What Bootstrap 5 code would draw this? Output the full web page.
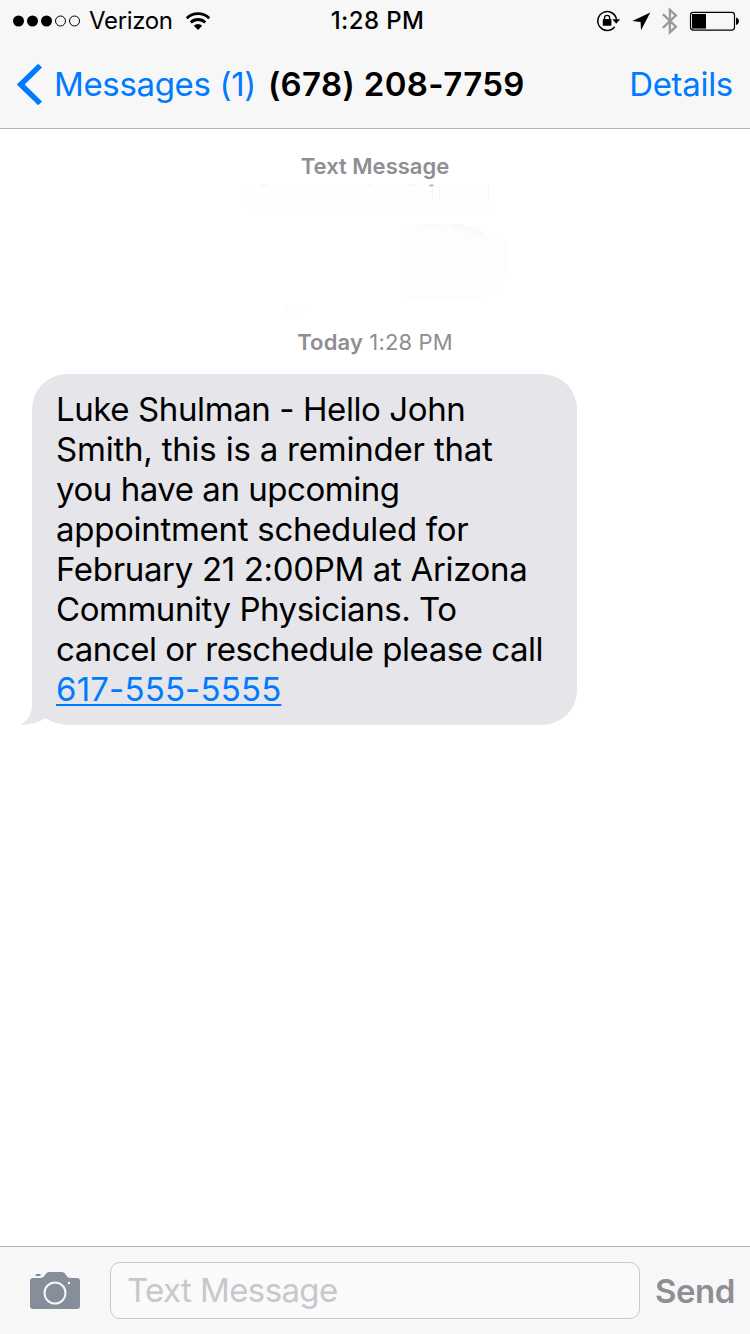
<!DOCTYPE html>
<html lang="en">
<head>
<meta charset="utf-8">
<meta name="viewport" content="width=device-width, initial-scale=1">
<title>Messages</title>
<link href="https://cdn.jsdelivr.net/npm/bootstrap@5.3.0/dist/css/bootstrap.min.css" rel="stylesheet">
<style>
  :root { --ios-blue: #007aff; --ios-gray: #8e8e93; --bar: #f7f7f7; }
  body { font-family: Inter, "Liberation Sans", sans-serif; color: #000; background: #fff; }
  .phone { height: 1334px; width: 750px; overflow: hidden; }
  .top-bar { height: 129px; background: var(--bar); border-bottom: 1px solid #b2b2b2; }
  .status { height: 41px; font-size: 24px; line-height: 41px; }
  .status svg, .nav-row svg { flex: none; display: block; }
  .signal { padding-left: 13px; }
  .carrier { letter-spacing: -.35px; }
  .wifi { margin-left: 12px; }
  .clock { font-weight: 500; letter-spacing: .4px; padding-left: 5px; }
  .nav-row { height: 87px; font-size: 33px; line-height: 87px; white-space: nowrap; }
  .nav-row a, .bubble a { color: var(--ios-blue); }
  .back { letter-spacing: -.35px; }
  .peer { font-weight: 600; letter-spacing: .36px; margin-left: 12px; }
  .details { letter-spacing: -.3px; margin-right: 17px; }
  .stamp { font-size: 22px; line-height: 26px; color: var(--ios-gray); }
  .stamp strong { font-weight: 600; }
  .stamp.first { padding-top: 24px; }
  .stamp.today { letter-spacing: .15px; }
  .smudge { margin-top: 4px; }
  .bubble { width: 545px; height: 351px; margin: 19px 0 0 32px; border-radius: 35px; background: #e5e5ea;
    padding: 15px 0 0 24px; font-size: 33px; line-height: 40px; white-space: nowrap; }
  .bubble span, .bubble a { display: table; }
  .bubble a { text-decoration-thickness: 2px; text-underline-offset: 3px; letter-spacing: .17px; }
  .l1 { letter-spacing: -.4px; } .l2 { letter-spacing: -.21px; }
  .l3 { letter-spacing: -.46px; } .l4 { letter-spacing: -.29px; }
  .l5 { letter-spacing: -.33px; } .l6 { letter-spacing: -.46px; }
  .l7 { letter-spacing: -.48px; }
  .tail { left: -12px; bottom: 0; z-index: -1; }
  .composer { height: 88px; background: var(--bar); border-top: 1px solid #b2b2b2; }
  .composer svg { margin: 0 30px; }
  .composer .form-control { width: 530px; height: 57px; background: #fafafa; border: 1px solid #c8c8cd; border-radius: 10px;
    font-size: 33px; padding: 0 16px 2px; letter-spacing: -.6px; }
  .composer .form-control::placeholder { color: #c7c7cc; opacity: 1; }
  .send { color: var(--ios-gray); font-size: 33px; font-weight: 600; line-height: 40px; letter-spacing: -.5px; margin-left: 15px; }
</style>
</head>
<body>
<main class="phone d-flex flex-column">
  <header class="top-bar flex-shrink-0">
    <div class="status row g-0">
      <div class="col-4 d-flex align-items-center signal">
        <svg width="68" height="12" viewBox="0 0 68 12"><g fill="#000"><circle cx="5.5" cy="6" r="5.5"/><circle cx="19.5" cy="6" r="5.5"/><circle cx="33.5" cy="6" r="5.5"/></g><g fill="none" stroke="#000"><circle cx="47.5" cy="6" r="5"/><circle cx="61.5" cy="6" r="5"/></g></svg>
        <span class="carrier ms-2">Verizon</span>
        <svg class="wifi" width="26" height="20" viewBox="0 0 26 20"><g fill="none" stroke="#000" stroke-width="2.800"><path d="M1.800 7.200a16 16 0 0 1 22.400 0"/><path d="M5.800 11.400a10.400 10.400 0 0 1 14.400 0"/></g><path d="M8.800 14.700a6 6 0 0 1 8.400 0L13 19Z"/></svg>
      </div>
      <div class="col-4 text-center clock">1:28 PM</div>
      <div class="col-4 d-flex align-items-center justify-content-end">
        <svg width="154" height="40" viewBox="0 0 154 40">
          <path d="M18.700 25.700A9.400 9.400 0 1 1 20.500 18.500" fill="none" stroke="#000" stroke-width="1.500"/>
          <path d="M16.300 18.300h7.800l-3.900 4.400Z"/>
          <rect x="6.800" y="18" width="8.600" height="6.800" rx=".8"/><path d="M8.500 18.500v-1.600a2.600 2.600 0 0 1 5.200 0v1.600" fill="none" stroke="#000" stroke-width="1.300"/>
          <path d="M54.300 11.500 45 29.300 44.600 21 36.300 20Z"/>
          <path d="m66.900 13.200 13 12.500-6 5.600V8.800l6 5.600-13 12.500" fill="none" stroke="#999" stroke-width="2.300"/>
          <rect x="94.500" y="11.300" width="44" height="17.800" rx="2.800" fill="none" stroke="#000" stroke-width="1.200"/>
          <rect x="96" y="13" width="14" height="14.600"/><path d="M140 16.700h1q2 1 2 3.500t-2 3.500h-1Z"/>
        </svg>
      </div>
    </div>
    <nav class="nav-row d-flex align-items-center">
      <a href="#" class="d-flex align-items-center text-decoration-none"><svg width="54" height="44" viewBox="0 0 54 44"><path d="M40.100 2.600 20.700 21.500l19.400 18.900" fill="none" stroke="#007aff" stroke-width="5.500"/></svg><span class="back">Messages (1)</span></a>
      <span class="peer">(678) 208-7759</span>
      <a href="#" class="details text-decoration-none ms-auto">Details</a>
    </nav>
  </header>
  <section class="flex-grow-1">
    <div class="stamp first text-center"><strong>Text Message</strong></div>
    <svg class="smudge d-block mx-auto" width="280" height="146" viewBox="235 183 280 146">
      <path d="M246 184h243v26H252q-8-12-6-26Z" fill="#fefefe"/>
      <path d="M260 184h8v2h-8Zm106 0h6v2h-6Zm40 0h8v2h-8Z" fill="#f8f8f8"/>
      <path d="M429.500 184.500h4v2h-4Z" fill="#b5b5b5"/><path d="M432.500 186v13M439.500 186v13M488.500 184v16" stroke="#f5f5f5" fill="none"/>
      <path d="M406 224h45q25-2 36 12l20 6v32h-10v20h-14l-5 6h-72Z" fill="#fdfdfd"/>
      <path d="M419 224h22v4q-12 2-22-4Zm32 0q22-1 34 10l-5 3q-14-8-29-8Z" fill="#fafafa"/>
      <path d="M285 304h20q-4 12-18 16Z" fill="#fdfdfd"/>
    </svg>
    <div class="stamp today text-center"><strong>Today</strong> 1:28 PM</div>
    <div class="bubble position-relative z-0">
      <svg class="tail position-absolute" width="80" height="40" viewBox="0 0 80 40"><path d="M0 40h80V0H12v24Z" fill="#fff"/><path d="M12 0v20q0 14-11.500 19.700Q15 40 25.500 33 35 40 52 40h28V0Z" fill="#e5e5ea"/></svg>
      <span class="l1">Luke Shulman - Hello John</span>
      <span class="l2">Smith, this is a reminder that</span>
      <span class="l3">you have an upcoming</span>
      <span class="l4">appointment scheduled for</span>
      <span class="l5">February 21 2:00PM at Arizona</span>
      <span class="l6">Community Physicians. To</span>
      <span class="l7">cancel or reschedule please call</span>
      <a href="#">617-555-5555</a>
    </div>
  </section>
  <footer class="composer d-flex align-items-center flex-shrink-0">
    <svg class="flex-shrink-0" width="50" height="38" viewBox="0 0 50 38"><path d="M3 6h8q2.500 0 4-3Q16.500 0 19 0h13q2.500 0 4 3 1.500 3 4 3h7q3 0 3 3V34q0 3-3 3H3q-3 0-3-3V9q0-3 3-3ZM6 2h4.500v2H5.500Z" fill="#868e99"/><circle cx="25" cy="21" r="10.500" fill="none" stroke="#f7f7f7" stroke-width="2"/><circle cx="39" cy="11" r="1.200" fill="#f7f7f7"/></svg>
    <input class="form-control flex-shrink-0" placeholder="Text Message" aria-label="Text Message">
    <span class="send">Send</span>
  </footer>
</main>
<script src="https://cdn.jsdelivr.net/npm/bootstrap@5.3.0/dist/js/bootstrap.bundle.min.js"></script>
</body>
</html>
